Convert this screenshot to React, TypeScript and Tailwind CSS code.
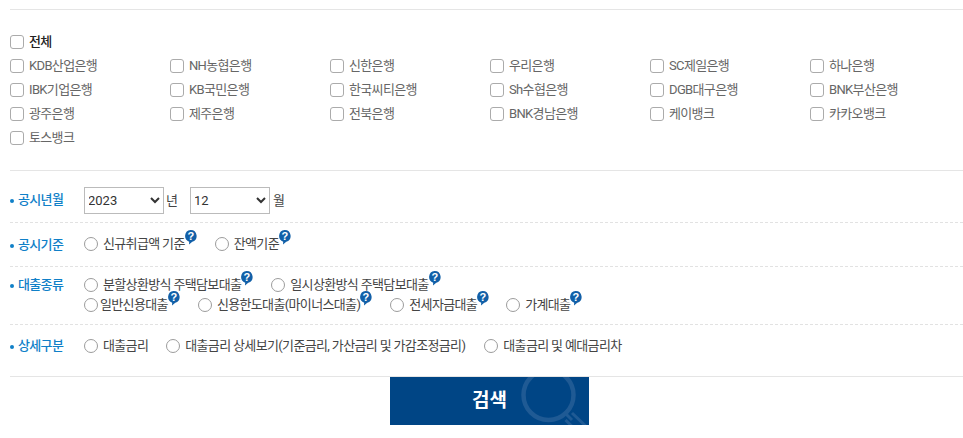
import React from "react";

const banks = [
  "KDB산업은행","NH농협은행","신한은행","우리은행","SC제일은행","하나은행",
  "IBK기업은행","KB국민은행","한국씨티은행","Sh수협은행","DGB대구은행","BNK부산은행",
  "광주은행","제주은행","전북은행","BNK경남은행","케이뱅크","카카오뱅크",
  "토스뱅크",
];

function Help() {
  return (
    <svg width="13" height="15" viewBox="0 0 13 15" className="shrink-0 -mt-[13px] -ml-[1px]">
      <path d="M6.5 0a6 6 0 0 1 1.8 11.75L5 14.5l.2-2.85A6 6 0 0 1 6.5 0z" fill="#1260a8" />
      <text x="6.5" y="10.3" textAnchor="middle" fontSize="11" fontWeight="700" fill="#fff" fontFamily="Liberation Sans, sans-serif">?</text>
    </svg>
  );
}

function Radio({ label, help, gap = "mr-[5px]", className = "" }: { label: string; help?: boolean; gap?: string; className?: string }) {
  return (
    <label className={`flex items-center ${className}`}>
      <input type="radio" name={label} className={`appearance-none m-0 w-[14px] h-[14px] rounded-full border-[1.5px] border-[#9c9c9c] bg-white ${gap}`} />
      <span>{label}</span>
      {help && <Help />}
    </label>
  );
}

function Row({ title, children, border = true, className = "", labelPad = "pt-[1px]" }: { title: string; children: React.ReactNode; border?: boolean; className?: string; labelPad?: string }) {
  return (
    <div className={`flex ${border ? "border-b border-dashed border-[#e2e2e2]" : ""} ${className}`}>
      <div className={`w-[74px] shrink-0 flex items-start text-[#1080c8] font-medium ${labelPad}`}>
        <span className="w-[4px] h-[4px] rounded-full bg-[#1080c8] mt-[9px] mr-[4px]" />
        <span>{title}</span>
      </div>
      <div className="flex-1">{children}</div>
    </div>
  );
}

const check = "appearance-none m-0 w-[14px] h-[14px] mr-[5px] rounded-[3px] border-[1.5px] border-[#ababab] bg-white";

export default function App() {
  return (
    <div className="w-[963px] h-[438px] bg-white pl-[10px] pt-[9px] overflow-hidden text-[13px] tracking-[-0.65px] leading-[20px] text-[#555]" style={{ fontFamily: 'Roboto, "Noto Sans CJK KR", sans-serif' }}>
      <div className="border-t border-[#e5e5e5] pt-[20px]">
        <label className="flex items-center h-[24px] text-[#222] font-medium">
          <input type="checkbox" className={check} />
          전체
        </label>
        <div className="grid grid-cols-[repeat(6,160px)] auto-rows-[24px] text-[#666]">
          {banks.map((b) => (
            <label key={b} className="flex items-center">
              <input type="checkbox" className={check} />
              {b}
            </label>
          ))}
        </div>
      </div>

      <div className="mt-[20px] border-t border-[#e5e5e5] pt-[16px] text-[#444]">
        <Row title="공시년월" className="h-[36px]" labelPad="pt-[3px]">
          <div className="flex items-center h-[27px]">
            <select defaultValue="2023" className="w-[80px] h-[27px] border border-[#bbb] bg-white text-[#333] tracking-normal text-[13px] [text-indent:-1px]">
              <option>2023</option>
            </select>
            <span className="ml-[2px] w-[24px]">년</span>
            <select defaultValue="12" className="w-[80px] h-[27px] border border-[#bbb] bg-white text-[#333] tracking-normal text-[13px] [text-indent:-1px]">
              <option>12</option>
            </select>
            <span className="ml-[3px]">월</span>
          </div>
        </Row>
        <Row title="공시기준" className="h-[44px] pt-[11px]">
          <div className="flex items-center">
            <Radio label="신규취급액 기준" help className="mr-[18px]" />
            <Radio label="잔액기준" help />
          </div>
        </Row>
        <Row title="대출종류" className="h-[58px] pt-[8px]" labelPad="pt-0">
          <div className="flex items-center">
            <Radio label="분할상환방식 주택담보대출" help className="mr-[18px]" />
            <Radio label="일시상환방식 주택담보대출" help />
          </div>
          <div className="flex items-center">
            <Radio label="일반신용대출" help gap="mr-[2px]" className="mr-[18px]" />
            <Radio label="신용한도대출(마이너스대출)" help className="mr-[18px]" />
            <Radio label="전세자금대출" help className="mr-[17px]" />
            <Radio label="가계대출" help />
          </div>
        </Row>
        <Row title="상세구분" border={false} className="h-[51px] pt-[11px]" labelPad="pt-0">
          <div className="flex items-center">
            <Radio label="대출금리" className="mr-[18px]" />
            <Radio label="대출금리 상세보기(기준금리, 가산금리 및 가감조정금리)" className="mr-[19px]" />
            <Radio label="대출금리 및 예대금리차" />
          </div>
        </Row>
      </div>

      <div className="border-t border-[#e5e5e5] flex justify-center">
        <button className="relative w-[199px] h-[48px] bg-[#004585] overflow-hidden text-white text-[19px] font-bold tracking-normal ml-[6px]">
          검색
          <svg width="199" height="48" viewBox="0 0 199 48" className="absolute left-0 top-0">
            <circle cx="158.5" cy="18" r="25" fill="none" stroke="#1f5a94" strokeWidth="4.5" />
            <path d="M176 37 L182 43 M182 36 L201 54 M175.5 43 L192 59" stroke="#1f5a94" strokeWidth="3" fill="none" />
          </svg>
        </button>
      </div>
    </div>
  );
}
